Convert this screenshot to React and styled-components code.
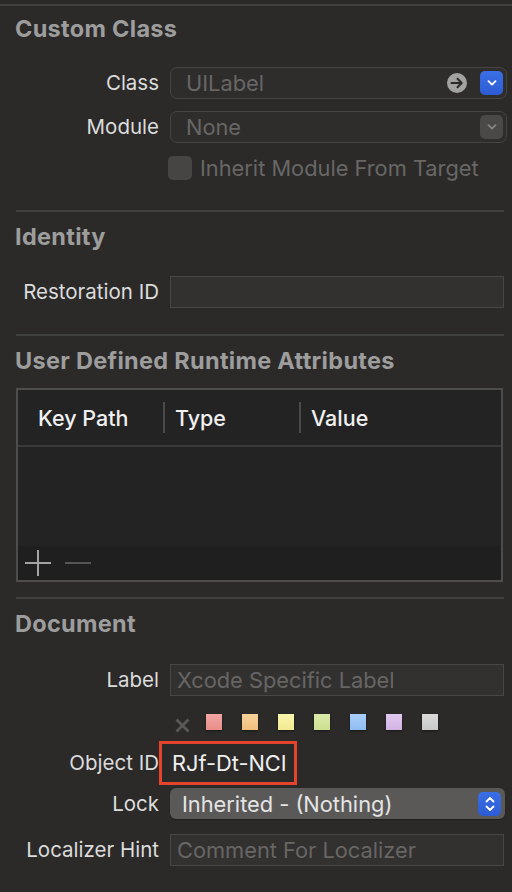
import React from 'react';
import styled, { createGlobalStyle } from 'styled-components';

const GlobalStyle = createGlobalStyle`
    html, body {
        margin: 0;
        padding: 0;
        background: #2b2a29;
    }
    body {
        font-family: Inter, "Noto Sans", "Liberation Sans", sans-serif;
        color: #dedede;
        -webkit-font-smoothing: antialiased;
    }
`;

const Inspector = styled.div`
    width: 512px;
    min-height: 892px;
    background: #2b2a29;
    padding-top: 4px;
    box-sizing: border-box;
`;

const TopLine = styled.div`
    height: 2px;
    background: #424140;
`;

const Section = styled.section`
    display: flex;
    flex-direction: column;
    padding-top: ${p => p.$top || 11}px;
    padding-bottom: ${p => p.$bottom || 0}px;
`;

const Divider = styled.div`
    height: 2px;
    margin: 0 8px 0 16px;
    background: #414040;
`;

const Heading = styled.h2`
    margin: 0 0 ${p => p.$gap || 24}px 15px;
    font-size: 23.5px;
    line-height: 28px;
    height: 28px;
    font-weight: 700;
    color: #9d9d9d;
    letter-spacing: 0.3px;
    white-space: nowrap;
`;

const Row = styled.div`
    display: grid;
    grid-template-columns: 159px 1fr;
    column-gap: 11px;
    align-items: center;
    margin-top: ${p => p.$mt || 0}px;
    padding-right: ${p => p.$right || 8}px;
    height: ${p => p.$h || 32}px;
`;

const Label = styled.span`
    text-align: right;
    font-size: 20.5px;
    line-height: 24px;
    color: #dcdcdc;
    white-space: nowrap;
`;

const ComboField = styled.div`
    height: 32px;
    box-sizing: border-box;
    border: 1px solid #464544;
    border-radius: 7px;
    background: #2e2d2c;
    display: flex;
    align-items: center;
    padding: 0 3px 0 15px;
    gap: 13px;
`;

const FieldText = styled.span`
    flex: 1;
    font-size: 21.8px;
    line-height: 24px;
    color: ${p => p.$light ? '#e4e4e4' : '#676665'};
    white-space: nowrap;
`;

const MenuButton = styled.div`
    width: 23px;
    height: 24px;
    border-radius: 5px;
    background: ${p => p.$blue ? 'linear-gradient(#3a6fe6, #2c5cd3)' : '#4a4948'};
    display: flex;
    align-items: center;
    justify-content: center;
`;

const TextField = styled.div`
    height: 32px;
    box-sizing: border-box;
    border: 1px solid #484746;
    background: #323130;
    display: flex;
    align-items: center;
    padding: 0 6px;
`;

const CheckRow = styled.label`
    grid-column: 2;
    margin-left: -2px;
    display: flex;
    align-items: center;
    gap: 8px;
    height: 24px;
    font-size: 21.8px;
    line-height: 24px;
    color: #686766;
    white-space: nowrap;
`;

const CheckBox = styled.span`
    width: 24px;
    height: 24px;
    border-radius: 5px;
    background: #464544;
`;

const Table = styled.div`
    margin: 0 9px 0 16px;
    border: 2px solid #4e4d4c;
    background: #232323;
    display: flex;
    flex-direction: column;
    height: 194px;
    box-sizing: border-box;
`;

const TableHead = styled.div`
    display: grid;
    grid-template-columns: 145px 136px 1fr;
    height: 55px;
    align-items: center;
    border-bottom: 2px solid #3a3a3a;
`;

const HeadCell = styled.div`
    font-size: 21.5px;
    line-height: 24px;
    font-weight: 500;
    color: #f0f0f0;
    height: 31px;
    display: flex;
    align-items: center;
    padding-left: ${p => p.$first ? 20 : 10}px;
    border-left: ${p => p.$first ? 'none' : '2px solid #4a4a4a'};
`;

const TableBody = styled.div`
    flex: 1;
`;

const TableFoot = styled.div`
    height: 34px;
    background: #1f1f1f;
    display: flex;
    align-items: center;
    padding-left: 6px;
    gap: 12px;
`;

const Swatches = styled.div`
    grid-column: 2;
    display: flex;
    align-items: center;
    height: 16px;
    gap: 20px;
    padding-left: 5px;
`;

const ClearMark = styled.span`
    display: flex;
    margin: 3px -4px -3px 0;
`;

const Swatch = styled.span`
    width: 16px;
    height: 16px;
    background: linear-gradient(${p => p.$top}, ${p => p.$bottom});
    box-shadow: 0 1px 2px rgba(0, 0, 0, 0.45);
`;

const IdValue = styled.span`
    justify-self: start;
    margin-left: -11px;
    border: 3px solid #e5432b;
    height: 44px;
    box-sizing: border-box;
    display: flex;
    align-items: center;
    padding: 0 7px 0 10px;
    font-size: 21.8px;
    line-height: 24px;
    color: #efefef;
    white-space: nowrap;
`;

const PopUp = styled.div`
    height: 31px;
    border-radius: 6px;
    background: #5a5958;
    display: flex;
    align-items: center;
    padding: 0 4px 0 12px;
    box-shadow: 0 1px 1px rgba(0, 0, 0, 0.3);
`;

const swatchColors = [
    ['#f2a7a3', '#e88d88'],
    ['#f7d29c', '#f0c07c'],
    ['#f9f4ad', '#f2ea90'],
    ['#dbe9a8', '#cde090'],
    ['#a9cefa', '#8fbdf3'],
    ['#e1c9ef', '#d2b3e4'],
    ['#dadada', '#c8c8c8'],
];

const ArrowCircle = () => (
    <svg width="20" height="20" viewBox="0 0 20 20">
        <circle cx="10" cy="10" r="10" fill="#a2a2a2" />
        <path d="M4.5 10 H14.5 M10.5 5.8 L14.7 10 L10.5 14.2" stroke="#2b2a29" strokeWidth="2" fill="none" strokeLinecap="round" strokeLinejoin="round" />
    </svg>
);

const ChevronDown = ({ color }) => (
    <svg width="10" height="6" viewBox="0 0 10 6">
        <path d="M1.5 1.2 L5 4.6 L8.5 1.2" stroke={color} strokeWidth="1.8" fill="none" strokeLinecap="round" strokeLinejoin="round" />
    </svg>
);

const Stepper = () => (
    <svg width="10" height="16" viewBox="0 0 10 16">
        <path d="M1.5 5.5 L5 2 L8.5 5.5 M1.5 10.5 L5 14 L8.5 10.5" stroke="#fff" strokeWidth="1.8" fill="none" strokeLinecap="round" strokeLinejoin="round" />
    </svg>
);

const PlusIcon = () => (
    <svg width="28" height="28" viewBox="0 0 28 28">
        <path d="M1 14 H27 M14 1 V27" stroke="#a3a3a3" strokeWidth="2" />
    </svg>
);

const MinusIcon = () => (
    <svg width="28" height="28" viewBox="0 0 28 28">
        <path d="M1 14 H27" stroke="#565656" strokeWidth="2" />
    </svg>
);

const ClearIcon = () => (
    <svg width="15" height="15" viewBox="0 0 15 15">
        <path d="M1.5 1.5 L13.5 13.5 M13.5 1.5 L1.5 13.5" stroke="#595857" strokeWidth="2.8" />
    </svg>
);

export default function App() {
    return (
        <>
            <GlobalStyle />
            <Inspector>
                <TopLine />

                <Section $top={9} $bottom={30}>
                    <Heading $gap={24}>Custom Class</Heading>
                    <Row $right={5}>
                        <Label>Class</Label>
                        <ComboField>
                            <FieldText>UILabel</FieldText>
                            <ArrowCircle />
                            <MenuButton $blue>
                                <ChevronDown color="#ffffff" />
                            </MenuButton>
                        </ComboField>
                    </Row>
                    <Row $right={5} $mt={12}>
                        <Label>Module</Label>
                        <ComboField>
                            <FieldText>None</FieldText>
                            <MenuButton>
                                <ChevronDown color="#878685" />
                            </MenuButton>
                        </ComboField>
                    </Row>
                    <Row $mt={13} $h={24}>
                        <CheckRow>
                            <CheckBox />
                            Inherit Module From Target
                        </CheckRow>
                    </Row>
                </Section>
                <Divider />

                <Section $bottom={26}>
                    <Heading $gap={25}>Identity</Heading>
                    <Row>
                        <Label>Restoration ID</Label>
                        <TextField />
                    </Row>
                </Section>
                <Divider />

                <Section $bottom={15}>
                    <Heading $gap={13}>User Defined Runtime Attributes</Heading>
                    <Table>
                        <TableHead>
                            <HeadCell $first>Key Path</HeadCell>
                            <HeadCell>Type</HeadCell>
                            <HeadCell>Value</HeadCell>
                        </TableHead>
                        <TableBody />
                        <TableFoot>
                            <PlusIcon />
                            <MinusIcon />
                        </TableFoot>
                    </Table>
                </Section>
                <Divider />

                <Section>
                    <Heading $gap={26}>Document</Heading>
                    <Row>
                        <Label>Label</Label>
                        <TextField>
                            <FieldText>Xcode Specific Label</FieldText>
                        </TextField>
                    </Row>
                    <Row $mt={18} $h={16}>
                        <Swatches>
                            <ClearMark>
                                <ClearIcon />
                            </ClearMark>
                            {swatchColors.map(([top, bottom]) => (
                                <Swatch key={top} $top={top} $bottom={bottom} />
                            ))}
                        </Swatches>
                    </Row>
                    <Row $mt={11} $h={44}>
                        <Label>Object ID</Label>
                        <IdValue>RJf-Dt-NCI</IdValue>
                    </Row>
                    <Row $mt={3} $h={31} $right={7}>
                        <Label>Lock</Label>
                        <PopUp>
                            <FieldText $light>Inherited - (Nothing)</FieldText>
                            <MenuButton $blue>
                                <Stepper />
                            </MenuButton>
                        </PopUp>
                    </Row>
                    <Row $mt={15} $h={31}>
                        <Label>Localizer Hint</Label>
                        <TextField>
                            <FieldText>Comment For Localizer</FieldText>
                        </TextField>
                    </Row>
                </Section>
            </Inspector>
        </>
    );
}
